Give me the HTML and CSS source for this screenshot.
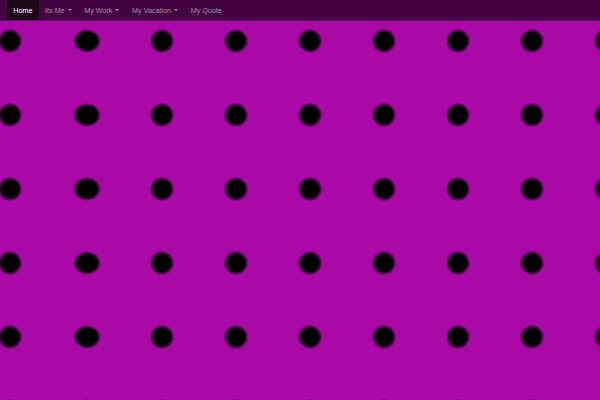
FILE: index.html
```html
<!DOCTYPE html>
<html>
<head>
<meta charset="utf-8">
<link rel="stylesheet" href="styles.css">
</head>
<body>
<nav class="navbar">
  <ul class="nav">
    <li class="nav-item active"><a>Home</a></li>
    <li class="nav-item"><a>Its Me <span class="caret"></span></a></li>
    <li class="nav-item"><a>My Work <span class="caret"></span></a></li>
    <li class="nav-item"><a>My Vacation <span class="caret"></span></a></li>
    <li class="nav-item"><a>My Quote</a></li>
  </ul>
</nav>
<main class="dots"></main>
</body>
</html>
```
FILE: styles.css
```css
html, body {
  margin: 0;
  padding: 0;
  height: 100%;
}
body {
  font-family: "Liberation Sans", Arial, sans-serif;
  background-color: #a90aa5;
  display: flex;
  flex-direction: column;
  overflow: hidden;
}
.navbar {
  height: 20px;
  background: #430343;
  border-bottom: 1px solid #5c0c5c;
  flex: none;
}
.nav {
  list-style: none;
  margin: 0;
  padding: 0 0 0 7px;
  display: flex;
  height: 100%;
}
.nav-item a {
  display: flex;
  align-items: center;
  height: 100%;
  padding: 0 6.3px;
  font-size: 7.2px;
  color: #a68fa6;
  white-space: pre;
}
.nav-item.active a {
  background: #1b081b;
  color: #ffffff;
}
.caret {
  display: inline-block;
  width: 0;
  height: 0;
  margin-left: 1px;
  border-top: 2px solid #a68fa6;
  border-left: 2px solid transparent;
  border-right: 2px solid transparent;
}
.dots {
  flex: 1;
  background-color: #a90aa5;
  background-image:
    radial-gradient(circle at 37px 37px, #000 0, #000 8.5px, #a90aa5 12.5px, rgba(169,10,165,0) 13px),
    radial-gradient(ellipse 14px 12px at 37px 37px, #000 0, #000 72%, #a90aa5 100%, rgba(169,10,165,0) 101%),
    linear-gradient(#a90aa5, #a90aa5),
    radial-gradient(circle at 37px 37px, #000 0, #000 8.5px, #a90aa5 12.5px, rgba(169,10,165,0) 13px);
  background-size: 74px 74px, 74px 74px, 125px 100%, 74px 74px;
  background-position: -27px -17px, 50px -17px, 0 0, 125px -17px;
  background-repeat: repeat-y, repeat-y, no-repeat, repeat;
}
```
